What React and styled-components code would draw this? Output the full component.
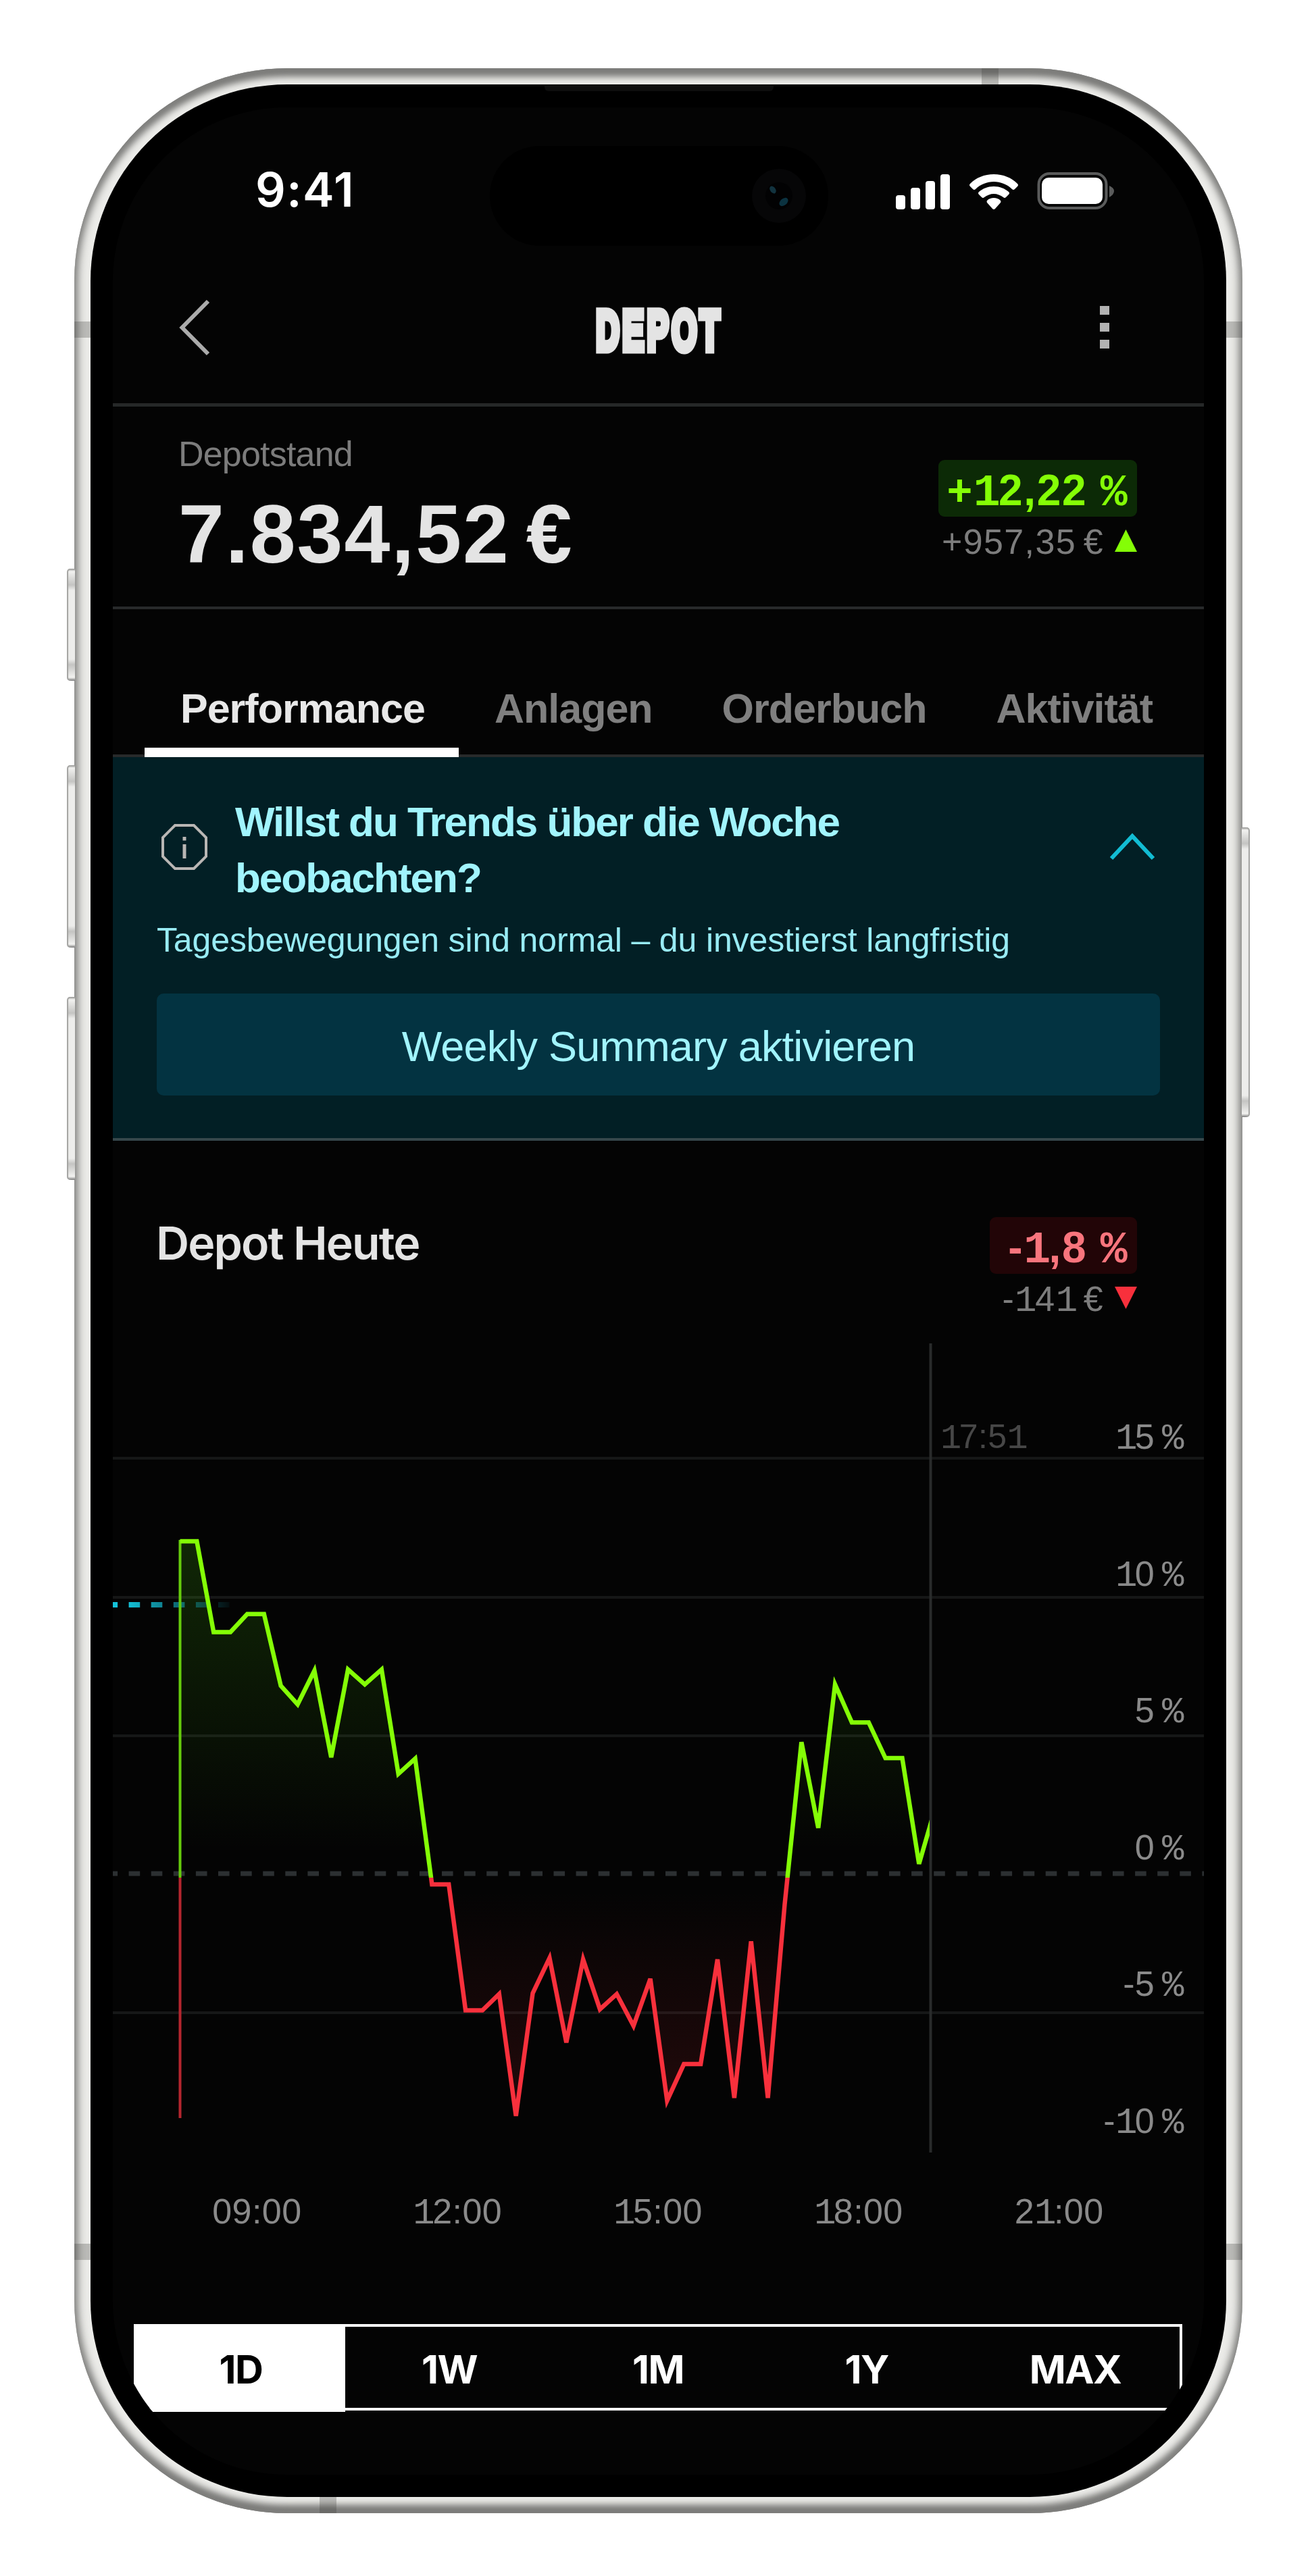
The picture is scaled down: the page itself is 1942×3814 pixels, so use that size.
import React from "react"
import styled, { createGlobalStyle, css } from "styled-components"

const GlobalStyle = createGlobalStyle`
  * {
    box-sizing: border-box;
  }

  body {
    margin: 0;
    background: #fff;
    font-family: "Liberation Sans", Arial, sans-serif;
  }
`

const Page = styled.div`
  width: 1942px;
  height: 3814px;
  padding: 101px 0 0 110px;
  overflow: hidden;
`

/* device */

const Phone = styled.div`
  position: relative;
  width: 1729px;
  height: 3620px;
  padding: 24px;
  border-radius: 315px;
  background: #ecece9;
  box-shadow:
    inset 0 0 14px 5px #868684,
    inset 0 15px 12px -4px #666664,
    inset 0 -15px 12px -4px #666664;
`

const Bezel = styled.div`
  position: relative;
  width: 1681px;
  height: 3572px;
  padding: 34px 33px 33px;
  border-radius: 291px;
  background: #000;
`

const Speaker = styled.div`
  position: absolute;
  top: 1px;
  left: 672px;
  width: 339px;
  height: 9px;
  border-radius: 0 0 6px 6px;
  background: #0d0d0d;
`

const SideButton = styled.div`
  position: absolute;
  top: ${props => props.$top}px;
  ${props => props.$side}: -11px;
  width: 12px;
  height: ${props => props.$height}px;
  border-radius: ${props => props.$side === "left" ? "5px 0 0 5px" : "0 5px 5px 0"};
  background: linear-gradient(#8f8f8d, #f2f2f0 4px, #c4c4c2 24px, #ededeb 32px, #ededeb calc(100% - 32px), #c4c4c2 calc(100% - 24px), #f2f2f0 calc(100% - 5px), #777);
  box-shadow: inset ${props => props.$side === "left" ? "2px" : "-2px"} 0 1px #a3a3a1;
`

const Antenna = styled.div`
  position: absolute;
  background: rgba(60, 60, 58, 0.28);
  ${props => props.$across
    ? css`width: 25px; height: 24px; left: ${props.$offset}px;`
    : css`width: 24px; height: 24px; top: ${props.$offset}px;`}
  ${props => props.$edge}: 0;
`

const Screen = styled.div`
  width: 1615px;
  height: 3505px;
  border-radius: 257px;
  overflow: hidden;
  background: #040404;
  display: flex;
  flex-direction: column;
`

/* status bar */

const StatusBar = styled.div`
  position: relative;
  display: flex;
  justify-content: space-between;
  align-items: center;
  height: 213px;
  padding: 34px 133px 0 211px;
`

const Clock = styled.span`
  font-family: Inter, sans-serif;
  font-weight: 600;
  font-size: 70px;
  line-height: 80px;
  letter-spacing: 1.5px;
  color: #fff;
  margin-top: -3px;
`

const Island = styled.div`
  position: absolute;
  top: 57px;
  left: 558px;
  width: 501px;
  height: 148px;
  border-radius: 74px;
  background: #000;
  display: flex;
  align-items: center;
  justify-content: flex-end;
  padding-right: 33px;
`

/* header */

const Header = styled.div`
  display: grid;
  grid-template-columns: 1fr auto 1fr;
  align-items: center;
  height: 230px;
  padding: 0 140px 0 96px;
  border-bottom: 5px solid #262828;
`

const Title = styled.h1`
  margin: 9px 0 0 46px;
  width: 190px;
  display: flex;
  justify-content: center;
  font-weight: bold;
  font-size: 84px;
  line-height: 100px;
  letter-spacing: 8px;
  color: #e4e4e4;
  transform: scaleX(0.57);
  -webkit-text-stroke: 11px #e4e4e4;
`

const MenuDots = styled.div`
  justify-self: end;
  display: flex;
  flex-direction: column;
  gap: 12px;

  span {
    width: 14px;
    height: 13px;
    background: #b2b2b2;
  }
`

/* balance */

const Balance = styled.div`
  display: flex;
  justify-content: space-between;
  height: 300px;
  padding: 40px 99px 0 97px;
  border-bottom: 4px solid #282a2b;
`

const BalanceLabel = styled.div`
  font-size: 52px;
  line-height: 60px;
  letter-spacing: -0.8px;
  color: #7c7c7c;
`

const BalanceValue = styled.div`
  margin: 29px 0 0 0;
  font-weight: bold;
  font-size: 122px;
  line-height: 120px;
  letter-spacing: 2px;
  word-spacing: -12px;
  color: #e4e4e4;
`

const Change = styled.div`
  display: flex;
  flex-direction: column;
  align-items: flex-end;
  margin-top: ${props => props.$offset || 0}px;
`

const Badge = styled.div`
  height: 84px;
  padding: 3px 17px 0 ${props => props.$down ? 27 : 13}px;
  border-radius: 9px;
  font-weight: bold;
  font-size: 64px;
  line-height: 84px;
  color: ${props => props.$down ? "#f9757d" : "#84fe06"};
  background: ${props => props.$down ? "#220507" : "#0c2a06"};
`

const ChangeAmount = styled.div`
  display: flex;
  align-items: center;
  gap: 16px;
  margin-top: 7px;
  font-size: 52px;
  line-height: 60px;
  word-spacing: -5px;
  color: #7d7d7d;
`

const Triangle = styled.span`
  width: 33px;
  height: 33px;
  margin-top: -3px;
  background: ${props => props.$down ? "#f8303c" : "#84fe06"};
  clip-path: ${props => props.$down
    ? "polygon(0 0, 100% 0, 50% 100%)"
    : "polygon(50% 0, 100% 100%, 0 100%)"};
`

const Slab = styled.span`
  font-family: "Liberation Mono", monospace;
  font-size: 1.04em;
  line-height: 1px;
`

const FigureText = styled.span`
  letter-spacing: ${props => props.$tight ? "0.008em" : "0.026em"};
  white-space: pre;

  ${Slab} {
    letter-spacing: ${props => props.$tight ? "-0.065em" : "-0.04em"};
  }
`

/* tabs */

const Tabs = styled.div`
  display: flex;
  align-items: flex-end;
  height: 219px;
  padding-left: 47px;
  border-bottom: 4px solid #282a2b;
`

const Tab = styled.div`
  margin-bottom: -4px;
  padding: 0 50px 8px 53px;
  font-weight: bold;
  font-size: 61px;
  line-height: 100px;
  letter-spacing: -1px;
  white-space: nowrap;
  color: ${props => props.$active ? "#e8e8e8" : "#7f7f7f"};
  border-bottom: 14px solid ${props => props.$active ? "#fff" : "transparent"};
`

/* hint panel */

const Hint = styled.div`
  height: 568px;
  padding: 54px 65px 0;
  background: #021f25;
  border-bottom: 4px solid #36474b;
`

const HintHead = styled.div`
  display: flex;
  align-items: center;
  padding: 0 7px 0 6px;

  svg {
    margin-bottom: 8px;
  }
`

const HintTitle = styled.h2`
  flex: 1;
  margin: 0 0 0 40px;
  font-weight: bold;
  font-size: 62px;
  line-height: 83px;
  letter-spacing: -2px;
  color: #a1f4fd;
`

const HintText = styled.p`
  margin: 21px 0 49px;
  font-size: 50px;
  line-height: 60px;
  letter-spacing: -0.13px;
  white-space: nowrap;
  color: #98ebf4;
`

const HintButton = styled.div`
  height: 151px;
  border-radius: 10px;
  background: #033341;
  font-size: 63px;
  line-height: 156px;
  letter-spacing: -0.8px;
  text-align: center;
  color: #a1f4fd;
`

/* chart */

const ChartHead = styled.div`
  display: flex;
  justify-content: space-between;
  align-items: flex-start;
  height: 264px;
  padding: 113px 99px 0 64px;
`

const ChartTitle = styled.h2`
  margin: -2px 0 0;
  font-family: Inter, sans-serif;
  font-weight: 600;
  font-size: 68px;
  line-height: 80px;
  letter-spacing: -1.9px;
  color: #e4e4e4;
`

const Plot = styled.div`
  position: relative;
  height: 1198px;
  margin-top: 36px;

  svg {
    display: block;
  }
`

const ValueAxis = styled.div`
  position: absolute;
  top: 37px;
  right: 33px;
  font-size: 52px;
  line-height: 202.5px;
  word-spacing: -4px;
  text-align: right;
  color: #8a8a8a;
`

const NowLabel = styled.div`
  position: absolute;
  top: 108px;
  left: 1225px;
  font-size: 50px;
  line-height: 60px;
  color: #474747;
`

const TimeAxis = styled.div`
  display: grid;
  grid-template-columns: repeat(5, 296.8px);
  margin-top: 57px;
  padding-left: 65px;
  font-size: 52px;
  line-height: 60px;
  text-align: center;
  color: #8a8a8a;
`

const Segments = styled.div`
  display: grid;
  grid-template-columns: repeat(5, 1fr);
  width: 1552px;
  height: 128px;
  margin: 137px 0 0 31px;
  border: 4px solid #fff;
`

const Segment = styled.div`
  font-family: Inter, sans-serif;
  font-weight: 700;
  font-size: 58px;
  line-height: 126px;
  letter-spacing: -1.5px;
  text-align: center;
  color: ${props => props.$active ? "#000" : "#fff"};
  background: ${props => props.$active ? "#fff" : "transparent"};
`

// 1 and % come from the mono face, everything else stays in the text face
const Figures = ({ children, tight }) => (
  <FigureText $tight={tight}>
    {children.split(/([1%])/).map((part, i) => (
      part === "1" || part === "%" ? <Slab key={i}>{part}</Slab> : part
    ))}
  </FigureText>
)

const StatusIcons = () => (
  <svg width="323" height="56" viewBox="0 0 323 56">
    <g fill="#fff">
      <rect x="0" y="34" width="14" height="21" rx="4" />
      <rect x="22" y="23" width="14" height="32" rx="4" />
      <rect x="44" y="13" width="14" height="42" rx="4" />
      <rect x="66" y="3" width="14" height="52" rx="4" />
      <path d="M145 3 C131 3 119 8 110 17 Q108 19 110 21 L114 25 Q116 27 118 25 C125 18 135 14 145 14 C155 14 165 18 172 25 Q174 27 176 25 L180 21 Q182 19 180 17 C171 8 159 3 145 3 Z" />
      <path d="M145 21 C136 21 129 24 123 29 Q121 31 123 33 L127 37 Q129 39 131 37 C135 34 140 32 145 32 C150 32 155 34 159 37 Q161 39 163 37 L167 33 Q169 31 167 29 C161 24 154 21 145 21 Z" />
      <path d="M145 38 C141 38 138 39 135 42 Q134 43 135 45 L143 54 Q145 56 147 54 L155 45 Q156 43 155 42 C152 39 149 38 145 38 Z" />
      <rect x="216" y="8" width="90" height="39" rx="10" />
    </g>
    <rect x="211.5" y="2" width="100" height="51" rx="16" fill="none" stroke="#5a5b5b" strokeWidth="4" />
    <path d="M316 20 Q323 23 323 28 Q323 33 316 37 Z" fill="#5a5b5b" />
  </svg>
)

const Camera = () => (
  <svg width="80" height="80" viewBox="0 0 80 80">
    <circle cx="40" cy="40" r="40" fill="#060607" />
    <circle cx="40" cy="40" r="20" fill="#020203" />
    <ellipse cx="31" cy="31" rx="4" ry="6" fill="#12333f" transform="rotate(-35 31 31)" />
    <ellipse cx="47" cy="49" rx="5" ry="7.5" fill="#0b3240" transform="rotate(50 47 49)" />
  </svg>
)

const BackIcon = () => (
  <svg width="52" height="84" viewBox="0 0 52 84" fill="none" stroke="#ababab" strokeWidth="6">
    <path d="M45 3 L6.500 42 L45 81" />
  </svg>
)

const InfoIcon = () => (
  <svg width="70" height="70" viewBox="0 0 70 70" fill="none" stroke="#b9b6b4" strokeWidth="4">
    <path d="M21 3 H49 L67 21 V49 L49 67 H21 L3 49 V21 Z" />
    <path d="M35 31 V52" strokeWidth="5" />
    <path d="M35 20 V25.500" strokeWidth="5" />
  </svg>
)

const CollapseIcon = () => (
  <svg width="68" height="42" viewBox="0 0 68 42" fill="none" stroke="#12bcd3" strokeWidth="6">
    <path d="M3 38 L34 5 L65 38" />
  </svg>
)

// share of change in percent, one value per step
const SERIES = [
  12, 12, 8.72, 8.72, 9.37, 9.37, 6.78, 6.11, 7.33, 4.2, 7.37, 6.83, 7.37, 3.6, 4.15,
  -0.39, -0.39, -4.94, -4.94, -4.35, -8.75, -4.32, -3.05, -6.1, -3.1, -4.9, -4.35, -5.5,
  -3.8, -8.2, -6.88, -6.88, -3.1, -8.1, -2.45, -8.1, -1.12, 4.75, 1.65, 6.83, 5.46, 5.46,
  4.17, 4.17, 0.35, 2.44
]

const ZERO = 785
const START = 99.5
const NOW = 1210.5
const toX = i => START + i * 24.86
const toY = v => ZERO - v * 41

const Chart = () => {
  const line = SERIES.map((v, i) => `${toX(i)},${toY(v)}`).join(" ")
  const area = `${START},${ZERO + 4} ${line} ${toX(SERIES.length - 1)},${ZERO + 4}`

  return (
    <svg width="1615" height="1198" viewBox="0 0 1615 1198" fill="none">
      <defs>
        <clipPath id="above"><rect x="0" y="0" width={NOW - 1.5} height={ZERO + 6} /></clipPath>
        <clipPath id="below"><rect x="0" y={ZERO + 6} width={NOW - 1.5} height="420" /></clipPath>
        <linearGradient id="gain" gradientUnits="userSpaceOnUse" x1="0" y1="293" x2="0" y2="750">
          <stop offset="0" stopColor="#52e010" stopOpacity="0.16" />
          <stop offset="1" stopColor="#52e010" stopOpacity="0" />
        </linearGradient>
        <linearGradient id="loss" gradientUnits="userSpaceOnUse" x1="0" y1="810" x2="0" y2="1145">
          <stop offset="0" stopColor="#f8303c" stopOpacity="0" />
          <stop offset="1" stopColor="#f8303c" stopOpacity="0.13" />
        </linearGradient>
        <linearGradient id="fade" gradientUnits="userSpaceOnUse" x1="20" y1="0" x2="180" y2="0">
          <stop offset="0" stopColor="#14c3da" />
          <stop offset="1" stopColor="#14c3da" stopOpacity="0" />
        </linearGradient>
      </defs>

      <path d="M0 170 H1615 M0 376 H1615 M0 581 H1615 M0 991 H1615" stroke="#161717" strokeWidth="4" />
      <polygon points={area} fill="url(#gain)" clipPath="url(#above)" />
      <polygon points={area} fill="url(#loss)" clipPath="url(#below)" />
      <path d={`M${NOW} 0 V1198`} stroke="#292b2b" strokeWidth="4" />
      <path d={`M0 ${ZERO} H1615`} stroke="#2c3032" strokeWidth="7" strokeDasharray="16.6 16.5" strokeDashoffset="9.5" />
      <path d="M0 387 H190" stroke="url(#fade)" strokeWidth="8" strokeDasharray="16.6 16.5" strokeDashoffset="9.5" />

      <path d={`M${START} 291 V${ZERO + 6}`} stroke="#66cc0c" strokeWidth="4" />
      <path d={`M${START} ${ZERO + 6} V1147`} stroke="#b5262f" strokeWidth="4" />
      <polyline points={line} stroke="#84fe06" strokeWidth="6.5" clipPath="url(#above)" />
      <polyline points={line} stroke="#f8303c" strokeWidth="6.5" clipPath="url(#below)" />
    </svg>
  )
}

const TABS = ["Performance", "Anlagen", "Orderbuch", "Aktivität"]
const LEVELS = ["15 %", "10 %", "5 %", "0 %", "-5 %", "-10 %"]
const HOURS = ["09:00", "12:00", "15:00", "18:00", "21:00"]
const RANGES = ["1D", "1W", "1M", "1Y", "MAX"]

const App = () => (
  <Page>
    <GlobalStyle />
    <Phone>
      <SideButton $side="left" $top={741} $height={166} />
      <SideButton $side="left" $top={1032} $height={270} />
      <SideButton $side="left" $top={1375} $height={271} />
      <SideButton $side="right" $top={1124} $height={429} />
      <Antenna $across $edge="top" $offset={1343} />
      <Antenna $across $edge="bottom" $offset={363} />
      <Antenna $edge="left" $offset={375} />
      <Antenna $edge="right" $offset={375} />
      <Antenna $edge="left" $offset={3221} />
      <Antenna $edge="right" $offset={3221} />

      <Bezel>
        <Speaker />
        <Screen>
          <StatusBar>
            <Clock>9:41</Clock>
            <Island><Camera /></Island>
            <StatusIcons />
          </StatusBar>

          <Header>
            <BackIcon />
            <Title>DEPOT</Title>
            <MenuDots><span /><span /><span /></MenuDots>
          </Header>

          <Balance>
            <div>
              <BalanceLabel>Depotstand</BalanceLabel>
              <BalanceValue>7.834,52 €</BalanceValue>
            </div>
            <Change $offset={39}>
              <Badge><Figures>+12,22 %</Figures></Badge>
              <ChangeAmount><Figures>+957,35 €</Figures><Triangle /></ChangeAmount>
            </Change>
          </Balance>

          <Tabs>
            {TABS.map((tab, i) => <Tab key={tab} $active={i === 0}>{tab}</Tab>)}
          </Tabs>

          <Hint>
            <HintHead>
              <InfoIcon />
              <HintTitle>Willst du Trends über die Woche<br />beobachten?</HintTitle>
              <CollapseIcon />
            </HintHead>
            <HintText>Tagesbewegungen sind normal – du investierst langfristig</HintText>
            <HintButton>Weekly Summary aktivieren</HintButton>
          </Hint>

          <ChartHead>
            <ChartTitle>Depot Heute</ChartTitle>
            <Change>
              <Badge $down><Figures>-1,8 %</Figures></Badge>
              <ChangeAmount><Figures>-141 €</Figures><Triangle $down /></ChangeAmount>
            </Change>
          </ChartHead>

          <Plot>
            <Chart />
            <NowLabel><Figures tight>17:51</Figures></NowLabel>
            <ValueAxis>
              {LEVELS.map(level => <div key={level}><Figures tight>{level}</Figures></div>)}
            </ValueAxis>
          </Plot>
          <TimeAxis>
            {HOURS.map(hour => <div key={hour}><Figures tight>{hour}</Figures></div>)}
          </TimeAxis>

          <Segments>
            {RANGES.map((range, i) => <Segment key={range} $active={i === 0}>{range}</Segment>)}
          </Segments>
        </Screen>
      </Bezel>
    </Phone>
  </Page>
)

export default App
